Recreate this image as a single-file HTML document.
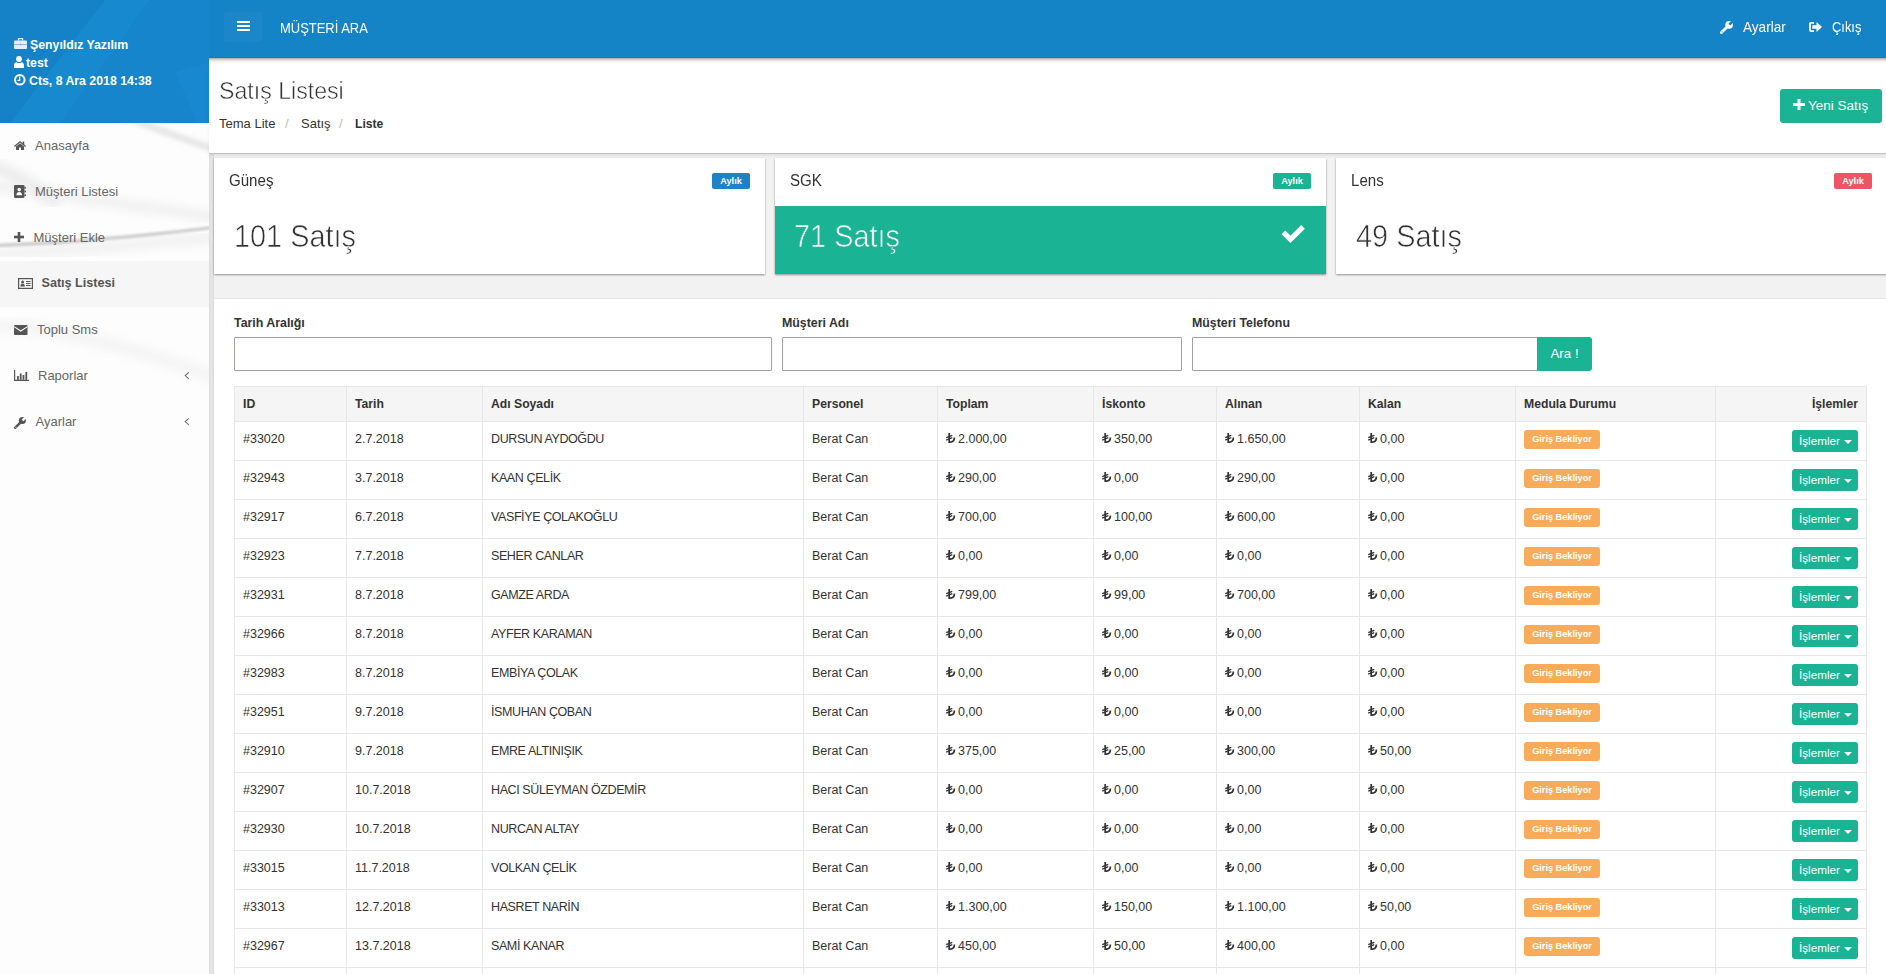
<!DOCTYPE html>
<html><head><meta charset="utf-8">
<style>
*{box-sizing:border-box;margin:0;padding:0}
html,body{width:1886px;height:974px;overflow:hidden}
body{font-family:"Liberation Sans",sans-serif;background:#f2f2f2;color:#333;position:relative}
.a{position:absolute;line-height:1;white-space:nowrap}
svg.a{overflow:visible}
#sidebar{left:0;top:0;width:209px;height:974px;background:#fdfdfd;overflow:hidden}
#sbhead{left:0;top:0;width:209px;height:123px;background:#1582c7;overflow:hidden}
.info{color:#fff;font-weight:bold;font-size:12.3px}
.nv{font-size:13px;color:#666}
#active{left:0;top:261px;width:209px;height:46px;background:#f6f6f6}
#strip{left:209px;top:154px;width:5px;height:820px;background:linear-gradient(to right,#d9d9d9 0,#e4e4e4 1px,#e4e4e4 4px,#d6d6d6 5px)}
#navbar{left:209px;top:0;width:1677px;height:58px;background:#1584c7;border-bottom:1px solid #0c7fc6}
#navsh{left:209px;top:58px;width:1677px;height:5px;background:linear-gradient(rgba(0,0,0,.36),rgba(0,0,0,.2) 25%,rgba(0,0,0,.1) 50%,rgba(0,0,0,.03) 80%,rgba(0,0,0,0))}
.wt{color:#fff;font-size:13px}
#pghead{left:209px;top:58px;width:1677px;height:96px;background:#fff;border-bottom:1px solid #c2c2c2;box-shadow:0 2px 3px rgba(0,0,0,.07)}
#btnnew{left:1780px;top:89px;width:102px;height:34px;background:#1ab394;border-radius:3px}
.card{position:absolute;top:158px;height:116px;background:#fff;box-shadow:0 1px 2px rgba(0,0,0,.4)}
.ct{font-size:17.4px;color:#333;transform:scaleX(.867);transform-origin:0 0}
.bdg{position:absolute;top:15px;height:16px;width:38px;border-radius:2px;color:#fff;font-size:9.2px;font-weight:bold;text-align:center;line-height:16px}
.num{font-size:31.4px;color:#333;transform:scaleX(.92);transform-origin:0 0;-webkit-text-stroke:.65px #fff}
#panel{left:214px;top:298px;width:1672px;height:676px;background:#fff;border-top:1px solid #e6e6e6}
.lbl{font-weight:bold;font-size:12.36px;color:#333}
.inp{position:absolute;top:337px;height:34px;border:1px solid #a79c9e;border-radius:1px;background:#fff}
#btnara{left:1537px;top:337px;width:55px;height:34px;background:#1ab394;border-radius:0 3px 3px 0}
table{position:absolute;left:234px;top:386px;border-collapse:collapse;table-layout:fixed;width:1633px}
th,td{border:1px solid #e7e7e7;text-align:left;padding:0 0 0 8px;color:#333;white-space:nowrap;overflow:hidden}
th{height:35px;background:#f5f5f5;font-weight:bold;font-size:12.2px;line-height:15px;padding-top:10px;vertical-align:top}
td{height:39px;font-size:12.5px;line-height:15px;padding-top:10px;vertical-align:top}
td.nm{letter-spacing:-.4px}
th.r,td.r{text-align:right;padding-right:8px}
.tl{display:inline-block;width:9px;height:10px;vertical-align:0px;margin-right:3px;overflow:visible}
.wb{display:inline-block;margin-top:-2px;background:#f8ac59;color:#fff;font-size:9.2px;font-weight:bold;border-radius:3px;width:76px;text-align:center;height:19px;line-height:19px;vertical-align:top}
.ib{display:inline-block;background:#1ab394;color:#fff;font-size:11.7px;border-radius:3px;height:22px;line-height:22px;width:66px;padding-left:7px;text-align:left;vertical-align:top;margin-top:-2px;position:relative}
.car{position:absolute;left:52px;top:10px;width:0;height:0;border-left:4px solid transparent;border-right:4px solid transparent;border-top:4px solid #fff}
</style></head><body>
<svg width="0" height="0" style="position:absolute">
<defs>
<symbol id="lira" viewBox="0 0 9 10"><path d="M3.2 0V9.1H4.3C6.7 9.1 8.4 7.5 8.4 4.6" stroke="#333" stroke-width="1.7" fill="none"/><path d="M0.2 4.7L6.3 2.3M0.2 7.1L6.3 4.7" stroke="#333" stroke-width="1.4" fill="none"/></symbol>
<mask id="wm1"><rect x="-2" y="-2" width="16" height="16" fill="#fff"/><path d="M8.6 3.4L13 -1" stroke="#000" stroke-width="2.4"/></mask>
</defs></svg>

<!-- SIDEBAR -->
<div id="sidebar" class="a">
 <svg class="a" style="left:0;top:123px" width="209" height="851">
  <defs><filter id="bl"><feGaussianBlur stdDeviation="5"/></filter><filter id="bl3"><feGaussianBlur stdDeviation="2.5"/></filter><filter id="bl2"><feGaussianBlur stdDeviation=".9"/></filter></defs>
  <path d="M120 -8 C150 4 180 14 240 36" stroke="#e2e2e2" stroke-width="6" fill="none" filter="url(#bl3)"/>
  <path d="M-20 40 C20 50 40 70 60 80" stroke="#ececec" stroke-width="14" fill="none" filter="url(#bl)"/>
  <path d="M-20 62 C60 70 140 86 240 96" stroke="#efefef" stroke-width="10" fill="none" filter="url(#bl)"/>
  <path d="M-20 132 C60 128 120 124 240 112" stroke="#f0f0f0" stroke-width="10" fill="none" filter="url(#bl)"/>
  <path d="M-5 122.5 C50 120.5 100 117.5 214 104.5" stroke="#cfcfcf" stroke-width="3.6" fill="none" filter="url(#bl2)"/>
  <path d="M-20 200 C60 205 140 225 230 260" stroke="#f5f5f5" stroke-width="14" fill="none" filter="url(#bl)"/>
 </svg>
</div>
<div id="sbhead" class="a">
 <svg class="a" style="left:0;top:0" width="209" height="123">
  <polygon points="105,0 150,0 60,123 10,123" fill="#1a8fd8" opacity=".5"/>
  <polygon points="150,0 209,0 209,123 60,123" fill="#1787cd" opacity=".6"/>
  <polygon points="175,72 209,62 209,123 198,123" fill="#1a8fd8" opacity=".45"/>
 </svg>
</div>
<div id="active" class="a"></div>

<svg class="a" style="left:14px;top:38px" width="13" height="11" viewBox="0 0 13 11"><path d="M4.4 2.6V.6h4.2v2" stroke="#e6eef5" stroke-width="1.1" fill="none"/><rect x="0" y="2.5" width="13" height="8.5" rx="1" fill="#e6eef5"/><rect x="0" y="6" width="13" height="0.9" fill="#7fb3dc"/><rect x="5.6" y="5.6" width="1.8" height="1.6" fill="#7fb3dc"/></svg>
<svg class="a" style="left:14px;top:56px" width="10" height="12" viewBox="0 0 10 12"><circle cx="5" cy="3" r="2.9" fill="#fff"/><path d="M0 12V9.6C0 7.4 1.4 6.4 2.7 6.3 3.4 6.9 4.2 7.2 5 7.2S6.6 6.9 7.3 6.3C8.6 6.4 10 7.4 10 9.6V12Z" fill="#fff"/></svg>
<svg class="a" style="left:14px;top:74px" width="12" height="12" viewBox="0 0 12 12"><circle cx="5.8" cy="5.8" r="4.8" stroke="#fff" stroke-width="2" fill="none"/><path d="M5.7 2.6V6.3H3.4" stroke="#fff" stroke-width="1.3" fill="none"/></svg>
<div class="a info" style="left:30px;top:38.6px">Şenyıldız Yazılım</div>
<div class="a info" style="left:26px;top:56.6px">test</div>
<div class="a info" style="left:29px;top:74.6px">Cts, 8 Ara 2018 14:38</div>

<svg class="a" style="left:14px;top:141px" width="12" height="9" viewBox="0 0 12 9"><path d="M6 0L0 5.1l.8.9L6 1.6l5.2 4.4.8-.9z" fill="#555"/><rect x="8.6" y="0.6" width="1.6" height="3" fill="#555"/><path d="M2 5.6V9h3V6.6h2V9h3V5.6L6 2.3z" fill="#555"/></svg>
<svg class="a" style="left:14px;top:185px" width="12" height="13" viewBox="0 0 12 13"><rect x="0" y="0" width="10.5" height="13" rx="1.3" fill="#555"/><rect x="10.5" y="2" width="1.5" height="1.6" fill="#555"/><rect x="10.5" y="5.7" width="1.5" height="1.6" fill="#555"/><rect x="10.5" y="9.4" width="1.5" height="1.6" fill="#555"/><circle cx="5.2" cy="4.6" r="1.8" fill="#fff"/><path d="M2.4 10.3C2.4 7.9 3.6 7 5.2 7S8 7.9 8 10.3z" fill="#fff"/></svg>
<svg class="a" style="left:14px;top:232px" width="10" height="10" viewBox="0 0 10 10"><rect x="3.7" y="0" width="2.6" height="10" fill="#555"/><rect x="0" y="3.7" width="10" height="2.6" fill="#555"/></svg>
<svg class="a" style="left:18px;top:278px" width="15" height="11" viewBox="0 0 15 11"><rect x="0.6" y="0.6" width="13.8" height="9.8" fill="none" stroke="#555" stroke-width="1.2"/><circle cx="4.6" cy="3.9" r="1.5" fill="#555"/><path d="M2.4 8.4C2.4 6.5 3.3 5.8 4.6 5.8S6.8 6.5 6.8 8.4z" fill="#555"/><rect x="8" y="3" width="4.5" height="1" fill="#555"/><rect x="8" y="5" width="4.5" height="1" fill="#555"/><rect x="8" y="7" width="4.5" height="1" fill="#555"/></svg>
<svg class="a" style="left:14px;top:325px" width="14" height="10" viewBox="0 0 14 10"><rect x="0" y="0" width="13.5" height="10" rx=".8" fill="#555"/><path d="M0 1.6L6.75 6 13.5 1.6" stroke="#fdfdfd" stroke-width="1.1" fill="none"/></svg>
<svg class="a" style="left:14px;top:370px" width="15" height="11" viewBox="0 0 15 11"><path d="M0.6 0v10.4H15" stroke="#555" stroke-width="1.2" fill="none"/><rect x="3" y="6" width="1.8" height="3.8" fill="#555"/><rect x="5.8" y="3.5" width="1.8" height="6.3" fill="#555"/><rect x="8.6" y="5" width="1.8" height="4.8" fill="#555"/><rect x="11.4" y="2" width="1.8" height="7.8" fill="#555"/></svg>
<svg class="a" style="left:14px;top:417px" width="12" height="12" viewBox="0 0 12 12"><g mask="url(#wm1)"><circle cx="8.4" cy="3.6" r="3.5" fill="#555"/><path d="M1.3 10.7L7.2 4.8" stroke="#555" stroke-width="2.6" stroke-linecap="round"/></g><circle cx="1.9" cy="10.1" r=".6" fill="#fdfdfd"/></svg>

<div class="a nv" style="left:35px;top:139px">Anasayfa</div>
<div class="a nv" style="left:35px;top:185px">Müşteri Listesi</div>
<div class="a nv" style="left:33.5px;top:231px">Müşteri Ekle</div>
<div class="a nv" style="left:41.5px;top:277px;font-weight:bold;font-size:12.6px;color:#555">Satış Listesi</div>
<div class="a nv" style="left:37px;top:323px">Toplu Sms</div>
<div class="a nv" style="left:38px;top:369px">Raporlar</div>
<div class="a nv" style="left:35.5px;top:415px">Ayarlar</div>
<svg class="a" style="left:184px;top:372px" width="6" height="8" viewBox="0 0 6 8"><path d="M4.8 .4L1.2 3.6 4.8 6.8" stroke="#6a6a6a" stroke-width="1.05" fill="none"/></svg>
<svg class="a" style="left:184px;top:418px" width="6" height="8" viewBox="0 0 6 8"><path d="M4.8 .4L1.2 3.6 4.8 6.8" stroke="#6a6a6a" stroke-width="1.05" fill="none"/></svg>

<div id="strip" class="a"></div>

<!-- PAGE HEADER -->
<div id="pghead" class="a"></div>
<div class="a" style="left:218.5px;top:78.9px;font-size:24.8px;color:#333;transform:scaleX(.933);transform-origin:0 0;-webkit-text-stroke:.5px #fff">Satış Listesi</div>
<div class="a" style="left:219px;top:117.3px;font-size:13px;color:#333">Tema Lite</div>
<div class="a" style="left:285px;top:117.3px;font-size:13px;color:#bbb">/</div>
<div class="a" style="left:301px;top:117.3px;font-size:13px;color:#333">Satış</div>
<div class="a" style="left:339px;top:117.3px;font-size:13px;color:#bbb">/</div>
<div class="a" style="left:355px;top:118.1px;font-size:12.1px;color:#333;font-weight:bold">Liste</div>
<!-- NAVBAR -->
<div id="navbar" class="a"></div>
<div id="navsh" class="a"></div>
<div class="a" style="left:224px;top:12px;width:38px;height:30px;background:rgba(255,255,255,.028);border-radius:3px"></div>
<div class="a" style="left:237px;top:21px;width:13px;height:2px;background:#fff"></div>
<div class="a" style="left:237px;top:25px;width:13px;height:2px;background:#fff"></div>
<div class="a" style="left:237px;top:29px;width:13px;height:2px;background:#fff"></div>
<div class="a wt" style="left:279.5px;top:21.2px;font-size:14px;transform:scaleX(.925);transform-origin:0 0">MÜŞTERİ ARA</div>
<svg class="a" style="left:1720px;top:21px" width="13" height="13" viewBox="0 0 12 12"><g mask="url(#wm1)"><circle cx="8.4" cy="3.6" r="3.5" fill="#fff"/><path d="M1.3 10.7L7.2 4.8" stroke="#fff" stroke-width="2.6" stroke-linecap="round"/></g><circle cx="1.9" cy="10.1" r=".6" fill="#1783c6"/></svg>
<div class="a wt" style="left:1742.5px;top:19.7px;font-size:14.5px;transform:scaleX(.937);transform-origin:0 0">Ayarlar</div>
<svg class="a" style="left:1809px;top:22px" width="13" height="10" viewBox="0 0 13 10"><path d="M5 .9H1.9C1.3 .9 1 1.3 1 1.9v6.2c0 .6.3 1 .9 1H5" stroke="#fff" stroke-width="1.8" fill="none"/><path d="M3.3 3.3h4.2V0L13 5 7.5 10V6.7H3.3z" fill="#fff"/></svg>
<div class="a wt" style="left:1831.5px;top:19.7px;font-size:14.5px;transform:scaleX(.89);transform-origin:0 0">Çıkış</div>

<div id="btnnew" class="a"></div>
<svg class="a" style="left:1793px;top:99px" width="12" height="11" viewBox="0 0 12 11"><rect x="4.5" y="0" width="3" height="11" fill="#fff"/><rect x="0" y="4" width="12" height="3" fill="#fff"/></svg>
<div class="a wt" style="left:1808px;top:98.6px;font-size:13.5px">Yeni Satış</div>

<!-- CARDS -->
<div class="card" style="left:214px;width:551px"></div>
<div class="card" style="left:775px;width:551px"><div style="position:absolute;left:0;top:48px;width:551px;height:68px;background:#1ab394"></div></div>
<div class="card" style="left:1336px;width:551px"></div>
<div class="bdg a" style="left:712px;top:173px;background:#1c84c6">Aylık</div>
<div class="bdg a" style="left:1273px;top:173px;background:#1ab394">Aylık</div>
<div class="bdg a" style="left:1834px;top:173px;background:#ed5565">Aylık</div>
<div class="a ct" style="left:229px;top:172.3px">Güneş</div>
<div class="a ct" style="left:790px;top:172.3px">SGK</div>
<div class="a ct" style="left:1351px;top:172.3px">Lens</div>
<div class="a num" style="left:234px;top:221.1px">101 Satış</div>
<div class="a num" style="left:794px;top:221.1px;color:#fff;-webkit-text-stroke:.65px #1ab394">71 Satış</div>
<div class="a num" style="left:1355.5px;top:221.1px">49 Satış</div>
<svg class="a" style="left:1280px;top:224px" width="26" height="20" viewBox="1280 224 26 20"><polyline points="1283.4,232.3 1290.5,239.4 1303,226.9" stroke="#fff" stroke-width="5.2" fill="none" stroke-linejoin="miter"/></svg>

<!-- PANEL -->
<div id="panel" class="a"></div>
<div class="a lbl" style="left:234px;top:317px">Tarih Aralığı</div>
<div class="a lbl" style="left:782px;top:317px">Müşteri Adı</div>
<div class="a lbl" style="left:1192px;top:317px">Müşteri Telefonu</div>
<div class="inp" style="left:234px;width:538px"></div>
<div class="inp" style="left:782px;width:400px"></div>
<div class="inp" style="left:1192px;width:346px"></div>
<div id="btnara" class="a"></div>
<div class="a wt" style="left:1550.5px;top:347px;font-size:13.3px">Ara !</div>

<table>
<colgroup><col style="width:112px"><col style="width:136px"><col style="width:321px"><col style="width:134px"><col style="width:156px"><col style="width:123px"><col style="width:143px"><col style="width:156px"><col style="width:200px"><col style="width:151px"></colgroup>
<tr><th>ID</th><th>Tarih</th><th>Adı Soyadı</th><th>Personel</th><th>Toplam</th><th>İskonto</th><th>Alınan</th><th>Kalan</th><th>Medula Durumu</th><th class="r">İşlemler</th></tr>
<tr><td>#33020</td><td>2.7.2018</td><td class="nm">DURSUN AYDOĞDU</td><td>Berat Can</td><td><svg class="tl" viewBox="0 0 9 10"><path d="M3.2 0V9.1H4.3C6.7 9.1 8.4 7.5 8.4 4.6" stroke="#333" stroke-width="1.7" fill="none"/><path d="M0.2 4.7L6.3 2.3M0.2 7.1L6.3 4.7" stroke="#333" stroke-width="1.4" fill="none"/></svg>2.000,00</td><td><svg class="tl" viewBox="0 0 9 10"><path d="M3.2 0V9.1H4.3C6.7 9.1 8.4 7.5 8.4 4.6" stroke="#333" stroke-width="1.7" fill="none"/><path d="M0.2 4.7L6.3 2.3M0.2 7.1L6.3 4.7" stroke="#333" stroke-width="1.4" fill="none"/></svg>350,00</td><td><svg class="tl" viewBox="0 0 9 10"><path d="M3.2 0V9.1H4.3C6.7 9.1 8.4 7.5 8.4 4.6" stroke="#333" stroke-width="1.7" fill="none"/><path d="M0.2 4.7L6.3 2.3M0.2 7.1L6.3 4.7" stroke="#333" stroke-width="1.4" fill="none"/></svg>1.650,00</td><td><svg class="tl" viewBox="0 0 9 10"><path d="M3.2 0V9.1H4.3C6.7 9.1 8.4 7.5 8.4 4.6" stroke="#333" stroke-width="1.7" fill="none"/><path d="M0.2 4.7L6.3 2.3M0.2 7.1L6.3 4.7" stroke="#333" stroke-width="1.4" fill="none"/></svg>0,00</td><td><span class="wb">Giriş Bekliyor</span></td><td class="r"><span class="ib">İşlemler<i class="car"></i></span></td></tr>
<tr><td>#32943</td><td>3.7.2018</td><td class="nm">KAAN ÇELİK</td><td>Berat Can</td><td><svg class="tl" viewBox="0 0 9 10"><path d="M3.2 0V9.1H4.3C6.7 9.1 8.4 7.5 8.4 4.6" stroke="#333" stroke-width="1.7" fill="none"/><path d="M0.2 4.7L6.3 2.3M0.2 7.1L6.3 4.7" stroke="#333" stroke-width="1.4" fill="none"/></svg>290,00</td><td><svg class="tl" viewBox="0 0 9 10"><path d="M3.2 0V9.1H4.3C6.7 9.1 8.4 7.5 8.4 4.6" stroke="#333" stroke-width="1.7" fill="none"/><path d="M0.2 4.7L6.3 2.3M0.2 7.1L6.3 4.7" stroke="#333" stroke-width="1.4" fill="none"/></svg>0,00</td><td><svg class="tl" viewBox="0 0 9 10"><path d="M3.2 0V9.1H4.3C6.7 9.1 8.4 7.5 8.4 4.6" stroke="#333" stroke-width="1.7" fill="none"/><path d="M0.2 4.7L6.3 2.3M0.2 7.1L6.3 4.7" stroke="#333" stroke-width="1.4" fill="none"/></svg>290,00</td><td><svg class="tl" viewBox="0 0 9 10"><path d="M3.2 0V9.1H4.3C6.7 9.1 8.4 7.5 8.4 4.6" stroke="#333" stroke-width="1.7" fill="none"/><path d="M0.2 4.7L6.3 2.3M0.2 7.1L6.3 4.7" stroke="#333" stroke-width="1.4" fill="none"/></svg>0,00</td><td><span class="wb">Giriş Bekliyor</span></td><td class="r"><span class="ib">İşlemler<i class="car"></i></span></td></tr>
<tr><td>#32917</td><td>6.7.2018</td><td class="nm">VASFİYE ÇOLAKOĞLU</td><td>Berat Can</td><td><svg class="tl" viewBox="0 0 9 10"><path d="M3.2 0V9.1H4.3C6.7 9.1 8.4 7.5 8.4 4.6" stroke="#333" stroke-width="1.7" fill="none"/><path d="M0.2 4.7L6.3 2.3M0.2 7.1L6.3 4.7" stroke="#333" stroke-width="1.4" fill="none"/></svg>700,00</td><td><svg class="tl" viewBox="0 0 9 10"><path d="M3.2 0V9.1H4.3C6.7 9.1 8.4 7.5 8.4 4.6" stroke="#333" stroke-width="1.7" fill="none"/><path d="M0.2 4.7L6.3 2.3M0.2 7.1L6.3 4.7" stroke="#333" stroke-width="1.4" fill="none"/></svg>100,00</td><td><svg class="tl" viewBox="0 0 9 10"><path d="M3.2 0V9.1H4.3C6.7 9.1 8.4 7.5 8.4 4.6" stroke="#333" stroke-width="1.7" fill="none"/><path d="M0.2 4.7L6.3 2.3M0.2 7.1L6.3 4.7" stroke="#333" stroke-width="1.4" fill="none"/></svg>600,00</td><td><svg class="tl" viewBox="0 0 9 10"><path d="M3.2 0V9.1H4.3C6.7 9.1 8.4 7.5 8.4 4.6" stroke="#333" stroke-width="1.7" fill="none"/><path d="M0.2 4.7L6.3 2.3M0.2 7.1L6.3 4.7" stroke="#333" stroke-width="1.4" fill="none"/></svg>0,00</td><td><span class="wb">Giriş Bekliyor</span></td><td class="r"><span class="ib">İşlemler<i class="car"></i></span></td></tr>
<tr><td>#32923</td><td>7.7.2018</td><td class="nm">SEHER CANLAR</td><td>Berat Can</td><td><svg class="tl" viewBox="0 0 9 10"><path d="M3.2 0V9.1H4.3C6.7 9.1 8.4 7.5 8.4 4.6" stroke="#333" stroke-width="1.7" fill="none"/><path d="M0.2 4.7L6.3 2.3M0.2 7.1L6.3 4.7" stroke="#333" stroke-width="1.4" fill="none"/></svg>0,00</td><td><svg class="tl" viewBox="0 0 9 10"><path d="M3.2 0V9.1H4.3C6.7 9.1 8.4 7.5 8.4 4.6" stroke="#333" stroke-width="1.7" fill="none"/><path d="M0.2 4.7L6.3 2.3M0.2 7.1L6.3 4.7" stroke="#333" stroke-width="1.4" fill="none"/></svg>0,00</td><td><svg class="tl" viewBox="0 0 9 10"><path d="M3.2 0V9.1H4.3C6.7 9.1 8.4 7.5 8.4 4.6" stroke="#333" stroke-width="1.7" fill="none"/><path d="M0.2 4.7L6.3 2.3M0.2 7.1L6.3 4.7" stroke="#333" stroke-width="1.4" fill="none"/></svg>0,00</td><td><svg class="tl" viewBox="0 0 9 10"><path d="M3.2 0V9.1H4.3C6.7 9.1 8.4 7.5 8.4 4.6" stroke="#333" stroke-width="1.7" fill="none"/><path d="M0.2 4.7L6.3 2.3M0.2 7.1L6.3 4.7" stroke="#333" stroke-width="1.4" fill="none"/></svg>0,00</td><td><span class="wb">Giriş Bekliyor</span></td><td class="r"><span class="ib">İşlemler<i class="car"></i></span></td></tr>
<tr><td>#32931</td><td>8.7.2018</td><td class="nm">GAMZE ARDA</td><td>Berat Can</td><td><svg class="tl" viewBox="0 0 9 10"><path d="M3.2 0V9.1H4.3C6.7 9.1 8.4 7.5 8.4 4.6" stroke="#333" stroke-width="1.7" fill="none"/><path d="M0.2 4.7L6.3 2.3M0.2 7.1L6.3 4.7" stroke="#333" stroke-width="1.4" fill="none"/></svg>799,00</td><td><svg class="tl" viewBox="0 0 9 10"><path d="M3.2 0V9.1H4.3C6.7 9.1 8.4 7.5 8.4 4.6" stroke="#333" stroke-width="1.7" fill="none"/><path d="M0.2 4.7L6.3 2.3M0.2 7.1L6.3 4.7" stroke="#333" stroke-width="1.4" fill="none"/></svg>99,00</td><td><svg class="tl" viewBox="0 0 9 10"><path d="M3.2 0V9.1H4.3C6.7 9.1 8.4 7.5 8.4 4.6" stroke="#333" stroke-width="1.7" fill="none"/><path d="M0.2 4.7L6.3 2.3M0.2 7.1L6.3 4.7" stroke="#333" stroke-width="1.4" fill="none"/></svg>700,00</td><td><svg class="tl" viewBox="0 0 9 10"><path d="M3.2 0V9.1H4.3C6.7 9.1 8.4 7.5 8.4 4.6" stroke="#333" stroke-width="1.7" fill="none"/><path d="M0.2 4.7L6.3 2.3M0.2 7.1L6.3 4.7" stroke="#333" stroke-width="1.4" fill="none"/></svg>0,00</td><td><span class="wb">Giriş Bekliyor</span></td><td class="r"><span class="ib">İşlemler<i class="car"></i></span></td></tr>
<tr><td>#32966</td><td>8.7.2018</td><td class="nm">AYFER KARAMAN</td><td>Berat Can</td><td><svg class="tl" viewBox="0 0 9 10"><path d="M3.2 0V9.1H4.3C6.7 9.1 8.4 7.5 8.4 4.6" stroke="#333" stroke-width="1.7" fill="none"/><path d="M0.2 4.7L6.3 2.3M0.2 7.1L6.3 4.7" stroke="#333" stroke-width="1.4" fill="none"/></svg>0,00</td><td><svg class="tl" viewBox="0 0 9 10"><path d="M3.2 0V9.1H4.3C6.7 9.1 8.4 7.5 8.4 4.6" stroke="#333" stroke-width="1.7" fill="none"/><path d="M0.2 4.7L6.3 2.3M0.2 7.1L6.3 4.7" stroke="#333" stroke-width="1.4" fill="none"/></svg>0,00</td><td><svg class="tl" viewBox="0 0 9 10"><path d="M3.2 0V9.1H4.3C6.7 9.1 8.4 7.5 8.4 4.6" stroke="#333" stroke-width="1.7" fill="none"/><path d="M0.2 4.7L6.3 2.3M0.2 7.1L6.3 4.7" stroke="#333" stroke-width="1.4" fill="none"/></svg>0,00</td><td><svg class="tl" viewBox="0 0 9 10"><path d="M3.2 0V9.1H4.3C6.7 9.1 8.4 7.5 8.4 4.6" stroke="#333" stroke-width="1.7" fill="none"/><path d="M0.2 4.7L6.3 2.3M0.2 7.1L6.3 4.7" stroke="#333" stroke-width="1.4" fill="none"/></svg>0,00</td><td><span class="wb">Giriş Bekliyor</span></td><td class="r"><span class="ib">İşlemler<i class="car"></i></span></td></tr>
<tr><td>#32983</td><td>8.7.2018</td><td class="nm">EMBİYA ÇOLAK</td><td>Berat Can</td><td><svg class="tl" viewBox="0 0 9 10"><path d="M3.2 0V9.1H4.3C6.7 9.1 8.4 7.5 8.4 4.6" stroke="#333" stroke-width="1.7" fill="none"/><path d="M0.2 4.7L6.3 2.3M0.2 7.1L6.3 4.7" stroke="#333" stroke-width="1.4" fill="none"/></svg>0,00</td><td><svg class="tl" viewBox="0 0 9 10"><path d="M3.2 0V9.1H4.3C6.7 9.1 8.4 7.5 8.4 4.6" stroke="#333" stroke-width="1.7" fill="none"/><path d="M0.2 4.7L6.3 2.3M0.2 7.1L6.3 4.7" stroke="#333" stroke-width="1.4" fill="none"/></svg>0,00</td><td><svg class="tl" viewBox="0 0 9 10"><path d="M3.2 0V9.1H4.3C6.7 9.1 8.4 7.5 8.4 4.6" stroke="#333" stroke-width="1.7" fill="none"/><path d="M0.2 4.7L6.3 2.3M0.2 7.1L6.3 4.7" stroke="#333" stroke-width="1.4" fill="none"/></svg>0,00</td><td><svg class="tl" viewBox="0 0 9 10"><path d="M3.2 0V9.1H4.3C6.7 9.1 8.4 7.5 8.4 4.6" stroke="#333" stroke-width="1.7" fill="none"/><path d="M0.2 4.7L6.3 2.3M0.2 7.1L6.3 4.7" stroke="#333" stroke-width="1.4" fill="none"/></svg>0,00</td><td><span class="wb">Giriş Bekliyor</span></td><td class="r"><span class="ib">İşlemler<i class="car"></i></span></td></tr>
<tr><td>#32951</td><td>9.7.2018</td><td class="nm">İSMUHAN ÇOBAN</td><td>Berat Can</td><td><svg class="tl" viewBox="0 0 9 10"><path d="M3.2 0V9.1H4.3C6.7 9.1 8.4 7.5 8.4 4.6" stroke="#333" stroke-width="1.7" fill="none"/><path d="M0.2 4.7L6.3 2.3M0.2 7.1L6.3 4.7" stroke="#333" stroke-width="1.4" fill="none"/></svg>0,00</td><td><svg class="tl" viewBox="0 0 9 10"><path d="M3.2 0V9.1H4.3C6.7 9.1 8.4 7.5 8.4 4.6" stroke="#333" stroke-width="1.7" fill="none"/><path d="M0.2 4.7L6.3 2.3M0.2 7.1L6.3 4.7" stroke="#333" stroke-width="1.4" fill="none"/></svg>0,00</td><td><svg class="tl" viewBox="0 0 9 10"><path d="M3.2 0V9.1H4.3C6.7 9.1 8.4 7.5 8.4 4.6" stroke="#333" stroke-width="1.7" fill="none"/><path d="M0.2 4.7L6.3 2.3M0.2 7.1L6.3 4.7" stroke="#333" stroke-width="1.4" fill="none"/></svg>0,00</td><td><svg class="tl" viewBox="0 0 9 10"><path d="M3.2 0V9.1H4.3C6.7 9.1 8.4 7.5 8.4 4.6" stroke="#333" stroke-width="1.7" fill="none"/><path d="M0.2 4.7L6.3 2.3M0.2 7.1L6.3 4.7" stroke="#333" stroke-width="1.4" fill="none"/></svg>0,00</td><td><span class="wb">Giriş Bekliyor</span></td><td class="r"><span class="ib">İşlemler<i class="car"></i></span></td></tr>
<tr><td>#32910</td><td>9.7.2018</td><td class="nm">EMRE ALTINIŞIK</td><td>Berat Can</td><td><svg class="tl" viewBox="0 0 9 10"><path d="M3.2 0V9.1H4.3C6.7 9.1 8.4 7.5 8.4 4.6" stroke="#333" stroke-width="1.7" fill="none"/><path d="M0.2 4.7L6.3 2.3M0.2 7.1L6.3 4.7" stroke="#333" stroke-width="1.4" fill="none"/></svg>375,00</td><td><svg class="tl" viewBox="0 0 9 10"><path d="M3.2 0V9.1H4.3C6.7 9.1 8.4 7.5 8.4 4.6" stroke="#333" stroke-width="1.7" fill="none"/><path d="M0.2 4.7L6.3 2.3M0.2 7.1L6.3 4.7" stroke="#333" stroke-width="1.4" fill="none"/></svg>25,00</td><td><svg class="tl" viewBox="0 0 9 10"><path d="M3.2 0V9.1H4.3C6.7 9.1 8.4 7.5 8.4 4.6" stroke="#333" stroke-width="1.7" fill="none"/><path d="M0.2 4.7L6.3 2.3M0.2 7.1L6.3 4.7" stroke="#333" stroke-width="1.4" fill="none"/></svg>300,00</td><td><svg class="tl" viewBox="0 0 9 10"><path d="M3.2 0V9.1H4.3C6.7 9.1 8.4 7.5 8.4 4.6" stroke="#333" stroke-width="1.7" fill="none"/><path d="M0.2 4.7L6.3 2.3M0.2 7.1L6.3 4.7" stroke="#333" stroke-width="1.4" fill="none"/></svg>50,00</td><td><span class="wb">Giriş Bekliyor</span></td><td class="r"><span class="ib">İşlemler<i class="car"></i></span></td></tr>
<tr><td>#32907</td><td>10.7.2018</td><td class="nm">HACI SÜLEYMAN ÖZDEMİR</td><td>Berat Can</td><td><svg class="tl" viewBox="0 0 9 10"><path d="M3.2 0V9.1H4.3C6.7 9.1 8.4 7.5 8.4 4.6" stroke="#333" stroke-width="1.7" fill="none"/><path d="M0.2 4.7L6.3 2.3M0.2 7.1L6.3 4.7" stroke="#333" stroke-width="1.4" fill="none"/></svg>0,00</td><td><svg class="tl" viewBox="0 0 9 10"><path d="M3.2 0V9.1H4.3C6.7 9.1 8.4 7.5 8.4 4.6" stroke="#333" stroke-width="1.7" fill="none"/><path d="M0.2 4.7L6.3 2.3M0.2 7.1L6.3 4.7" stroke="#333" stroke-width="1.4" fill="none"/></svg>0,00</td><td><svg class="tl" viewBox="0 0 9 10"><path d="M3.2 0V9.1H4.3C6.7 9.1 8.4 7.5 8.4 4.6" stroke="#333" stroke-width="1.7" fill="none"/><path d="M0.2 4.7L6.3 2.3M0.2 7.1L6.3 4.7" stroke="#333" stroke-width="1.4" fill="none"/></svg>0,00</td><td><svg class="tl" viewBox="0 0 9 10"><path d="M3.2 0V9.1H4.3C6.7 9.1 8.4 7.5 8.4 4.6" stroke="#333" stroke-width="1.7" fill="none"/><path d="M0.2 4.7L6.3 2.3M0.2 7.1L6.3 4.7" stroke="#333" stroke-width="1.4" fill="none"/></svg>0,00</td><td><span class="wb">Giriş Bekliyor</span></td><td class="r"><span class="ib">İşlemler<i class="car"></i></span></td></tr>
<tr><td>#32930</td><td>10.7.2018</td><td class="nm">NURCAN ALTAY</td><td>Berat Can</td><td><svg class="tl" viewBox="0 0 9 10"><path d="M3.2 0V9.1H4.3C6.7 9.1 8.4 7.5 8.4 4.6" stroke="#333" stroke-width="1.7" fill="none"/><path d="M0.2 4.7L6.3 2.3M0.2 7.1L6.3 4.7" stroke="#333" stroke-width="1.4" fill="none"/></svg>0,00</td><td><svg class="tl" viewBox="0 0 9 10"><path d="M3.2 0V9.1H4.3C6.7 9.1 8.4 7.5 8.4 4.6" stroke="#333" stroke-width="1.7" fill="none"/><path d="M0.2 4.7L6.3 2.3M0.2 7.1L6.3 4.7" stroke="#333" stroke-width="1.4" fill="none"/></svg>0,00</td><td><svg class="tl" viewBox="0 0 9 10"><path d="M3.2 0V9.1H4.3C6.7 9.1 8.4 7.5 8.4 4.6" stroke="#333" stroke-width="1.7" fill="none"/><path d="M0.2 4.7L6.3 2.3M0.2 7.1L6.3 4.7" stroke="#333" stroke-width="1.4" fill="none"/></svg>0,00</td><td><svg class="tl" viewBox="0 0 9 10"><path d="M3.2 0V9.1H4.3C6.7 9.1 8.4 7.5 8.4 4.6" stroke="#333" stroke-width="1.7" fill="none"/><path d="M0.2 4.7L6.3 2.3M0.2 7.1L6.3 4.7" stroke="#333" stroke-width="1.4" fill="none"/></svg>0,00</td><td><span class="wb">Giriş Bekliyor</span></td><td class="r"><span class="ib">İşlemler<i class="car"></i></span></td></tr>
<tr><td>#33015</td><td>11.7.2018</td><td class="nm">VOLKAN ÇELİK</td><td>Berat Can</td><td><svg class="tl" viewBox="0 0 9 10"><path d="M3.2 0V9.1H4.3C6.7 9.1 8.4 7.5 8.4 4.6" stroke="#333" stroke-width="1.7" fill="none"/><path d="M0.2 4.7L6.3 2.3M0.2 7.1L6.3 4.7" stroke="#333" stroke-width="1.4" fill="none"/></svg>0,00</td><td><svg class="tl" viewBox="0 0 9 10"><path d="M3.2 0V9.1H4.3C6.7 9.1 8.4 7.5 8.4 4.6" stroke="#333" stroke-width="1.7" fill="none"/><path d="M0.2 4.7L6.3 2.3M0.2 7.1L6.3 4.7" stroke="#333" stroke-width="1.4" fill="none"/></svg>0,00</td><td><svg class="tl" viewBox="0 0 9 10"><path d="M3.2 0V9.1H4.3C6.7 9.1 8.4 7.5 8.4 4.6" stroke="#333" stroke-width="1.7" fill="none"/><path d="M0.2 4.7L6.3 2.3M0.2 7.1L6.3 4.7" stroke="#333" stroke-width="1.4" fill="none"/></svg>0,00</td><td><svg class="tl" viewBox="0 0 9 10"><path d="M3.2 0V9.1H4.3C6.7 9.1 8.4 7.5 8.4 4.6" stroke="#333" stroke-width="1.7" fill="none"/><path d="M0.2 4.7L6.3 2.3M0.2 7.1L6.3 4.7" stroke="#333" stroke-width="1.4" fill="none"/></svg>0,00</td><td><span class="wb">Giriş Bekliyor</span></td><td class="r"><span class="ib">İşlemler<i class="car"></i></span></td></tr>
<tr><td>#33013</td><td>12.7.2018</td><td class="nm">HASRET NARİN</td><td>Berat Can</td><td><svg class="tl" viewBox="0 0 9 10"><path d="M3.2 0V9.1H4.3C6.7 9.1 8.4 7.5 8.4 4.6" stroke="#333" stroke-width="1.7" fill="none"/><path d="M0.2 4.7L6.3 2.3M0.2 7.1L6.3 4.7" stroke="#333" stroke-width="1.4" fill="none"/></svg>1.300,00</td><td><svg class="tl" viewBox="0 0 9 10"><path d="M3.2 0V9.1H4.3C6.7 9.1 8.4 7.5 8.4 4.6" stroke="#333" stroke-width="1.7" fill="none"/><path d="M0.2 4.7L6.3 2.3M0.2 7.1L6.3 4.7" stroke="#333" stroke-width="1.4" fill="none"/></svg>150,00</td><td><svg class="tl" viewBox="0 0 9 10"><path d="M3.2 0V9.1H4.3C6.7 9.1 8.4 7.5 8.4 4.6" stroke="#333" stroke-width="1.7" fill="none"/><path d="M0.2 4.7L6.3 2.3M0.2 7.1L6.3 4.7" stroke="#333" stroke-width="1.4" fill="none"/></svg>1.100,00</td><td><svg class="tl" viewBox="0 0 9 10"><path d="M3.2 0V9.1H4.3C6.7 9.1 8.4 7.5 8.4 4.6" stroke="#333" stroke-width="1.7" fill="none"/><path d="M0.2 4.7L6.3 2.3M0.2 7.1L6.3 4.7" stroke="#333" stroke-width="1.4" fill="none"/></svg>50,00</td><td><span class="wb">Giriş Bekliyor</span></td><td class="r"><span class="ib">İşlemler<i class="car"></i></span></td></tr>
<tr><td>#32967</td><td>13.7.2018</td><td class="nm">SAMİ KANAR</td><td>Berat Can</td><td><svg class="tl" viewBox="0 0 9 10"><path d="M3.2 0V9.1H4.3C6.7 9.1 8.4 7.5 8.4 4.6" stroke="#333" stroke-width="1.7" fill="none"/><path d="M0.2 4.7L6.3 2.3M0.2 7.1L6.3 4.7" stroke="#333" stroke-width="1.4" fill="none"/></svg>450,00</td><td><svg class="tl" viewBox="0 0 9 10"><path d="M3.2 0V9.1H4.3C6.7 9.1 8.4 7.5 8.4 4.6" stroke="#333" stroke-width="1.7" fill="none"/><path d="M0.2 4.7L6.3 2.3M0.2 7.1L6.3 4.7" stroke="#333" stroke-width="1.4" fill="none"/></svg>50,00</td><td><svg class="tl" viewBox="0 0 9 10"><path d="M3.2 0V9.1H4.3C6.7 9.1 8.4 7.5 8.4 4.6" stroke="#333" stroke-width="1.7" fill="none"/><path d="M0.2 4.7L6.3 2.3M0.2 7.1L6.3 4.7" stroke="#333" stroke-width="1.4" fill="none"/></svg>400,00</td><td><svg class="tl" viewBox="0 0 9 10"><path d="M3.2 0V9.1H4.3C6.7 9.1 8.4 7.5 8.4 4.6" stroke="#333" stroke-width="1.7" fill="none"/><path d="M0.2 4.7L6.3 2.3M0.2 7.1L6.3 4.7" stroke="#333" stroke-width="1.4" fill="none"/></svg>0,00</td><td><span class="wb">Giriş Bekliyor</span></td><td class="r"><span class="ib">İşlemler<i class="car"></i></span></td></tr>
<tr><td>#32968</td><td>14.7.2018</td><td class="nm">AHMET YILMAZ</td><td>Berat Can</td><td><svg class="tl" viewBox="0 0 9 10"><path d="M3.2 0V9.1H4.3C6.7 9.1 8.4 7.5 8.4 4.6" stroke="#333" stroke-width="1.7" fill="none"/><path d="M0.2 4.7L6.3 2.3M0.2 7.1L6.3 4.7" stroke="#333" stroke-width="1.4" fill="none"/></svg>0,00</td><td><svg class="tl" viewBox="0 0 9 10"><path d="M3.2 0V9.1H4.3C6.7 9.1 8.4 7.5 8.4 4.6" stroke="#333" stroke-width="1.7" fill="none"/><path d="M0.2 4.7L6.3 2.3M0.2 7.1L6.3 4.7" stroke="#333" stroke-width="1.4" fill="none"/></svg>0,00</td><td><svg class="tl" viewBox="0 0 9 10"><path d="M3.2 0V9.1H4.3C6.7 9.1 8.4 7.5 8.4 4.6" stroke="#333" stroke-width="1.7" fill="none"/><path d="M0.2 4.7L6.3 2.3M0.2 7.1L6.3 4.7" stroke="#333" stroke-width="1.4" fill="none"/></svg>0,00</td><td><svg class="tl" viewBox="0 0 9 10"><path d="M3.2 0V9.1H4.3C6.7 9.1 8.4 7.5 8.4 4.6" stroke="#333" stroke-width="1.7" fill="none"/><path d="M0.2 4.7L6.3 2.3M0.2 7.1L6.3 4.7" stroke="#333" stroke-width="1.4" fill="none"/></svg>0,00</td><td><span class="wb">Giriş Bekliyor</span></td><td class="r"><span class="ib">İşlemler<i class="car"></i></span></td></tr>
</table>
</body></html>
